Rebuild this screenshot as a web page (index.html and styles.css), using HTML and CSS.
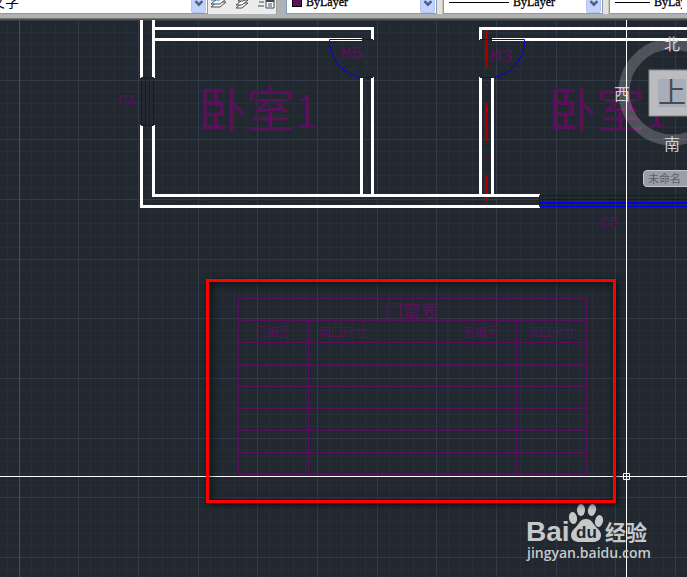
FILE: index.html
```html
<!DOCTYPE html>
<html lang="zh-CN">
<head>
<meta charset="utf-8">
<title>门窗表</title>
<link rel="stylesheet" href="styles.css">
</head>
<body>
<header class="toolbar">
  <div class="combo combo-style">
    <select aria-label="文字样式"><option>文字</option></select>
    <svg class="arrow" viewBox="0 0 15 21"><path d="M4 9l4 4 4-4"/></svg>
  </div>
  <div class="tools">
    <button type="button" aria-label="图层">
      <svg width="18" height="20" viewBox="0 0 18 20"><path class="sheet" d="M1 17h9l6-5H7z"/><path class="sheet" d="M1 14h9l6-5H7z"/><path class="sheet blue" d="M1 10h9l6-5H7z"/></svg>
    </button>
    <button type="button" aria-label="图层匹配">
      <svg width="18" height="20" viewBox="0 0 18 20"><path class="sheet" d="M2 18h6l6-5H8z"/><path class="sheet" d="M2 15h6l6-5H8z"/><path class="sheet" d="M4 11h5l5-4H9z"/></svg>
    </button>
    <button type="button" aria-label="图层状态">
      <svg width="18" height="20" viewBox="0 0 18 20"><path class="sheet" d="M1 12h5M0 16h6M3 9h5"/><path class="panel" d="M8 10h8v8H8z"/><path class="panel-top" d="M8 11h8"/><path class="sheet" d="M10 14h4M10 16h4"/></svg>
    </button>
  </div>
  <div class="gap-bar"></div>
  <div class="combo combo-color">
    <span class="swatch"></span>
    <select aria-label="颜色"><option>ByLayer</option></select>
    <svg class="arrow" viewBox="0 0 15 21"><path d="M4 9l4 4 4-4"/></svg>
  </div>
  <div class="divider"></div>
  <div class="combo combo-line">
    <span class="sample"></span>
    <select aria-label="线型"><option>ByLayer</option></select>
    <svg class="arrow" viewBox="0 0 15 21"><path d="M4 9l4 4 4-4"/></svg>
  </div>
  <div class="divider"></div>
  <div class="combo combo-weight">
    <span class="sample short"></span>
    <select aria-label="线宽"><option>ByLayer</option></select>
  </div>
</header>

<main class="canvas">
  <svg class="drawing" aria-label="平面图">
    <defs>
      <pattern id="grid" x="19" y="20" width="179" height="179" patternUnits="userSpaceOnUse">
        <path class="minor" d="M12 0h1v179h-1zM24 0h1v179h-1zM36 0h1v179h-1zM48 0h1v179h-1zM71 0h1v179h-1zM83 0h1v179h-1zM95 0h1v179h-1zM107 0h1v179h-1zM131 0h1v179h-1zM143 0h1v179h-1zM155 0h1v179h-1zM167 0h1v179h-1z"/>
        <path class="minor" d="M0 12h179v1H0zM0 24h179v1H0zM0 36h179v1H0zM0 48h179v1H0zM0 71h179v1H0zM0 83h179v1H0zM0 95h179v1H0zM0 107h179v1H0zM0 131h179v1H0zM0 143h179v1H0zM0 155h179v1H0zM0 167h179v1H0z"/>
        <path class="major" d="M0 0h1v179H0zM59 0h1v179h-1zM119 0h1v179h-1zM0 0h179v1H0zM0 60h179v1H0zM0 119h179v1H0z"/>
      </pattern>
    </defs>
    <g transform="translate(0 -20)">
      <rect width="100%" height="110%" fill="url(#grid)"/>
      <path class="axis-y" d="M19.5 20V3000"/>

      <g class="room-name">
        <text x="198" y="127">卧室1</text>
        <text x="548" y="127">卧室1</text>
      </g>

      <g class="center-line">
        <path stroke-dashoffset="12" d="M147 33.5H3000M147 201.5H3000"/>
        <path d="M147.5 30V201M367.5 30V201"/>
        <path class="strong" d="M486.5 30V201"/>
      </g>

      <path class="wall" d="M141.5 20V78M153.5 20V78M141.5 125V206.5H540M153.5 125V195.5H540M155 39.5H362M155 28.5H372.5V40M480.5 40V28.5H3000M492 39.5H3000M361.5 77V195M372.5 77V195M480.5 77V195M492.5 77V195"/>

      <g class="opening">
        <path d="M141.5 77.5h12v48h-12zM145.5 77v48M149.5 77v48"/>
        <path d="M3000 195.5H539.5V206.5H3000M540 199.5H3000M540 202.5H3000M540 203.5H3000"/>
        <path d="M373 39.5H329.5A38 38 0 0 0 360 77.5H373"/>
        <path d="M480 39.5H524.5A38 38 0 0 1 494 77.5H480"/>
      </g>

      <g class="tag">
        <text x="340" y="59">M5</text>
        <text x="490" y="62">M3</text>
        <text class="small" x="118" y="105">C4</text>
        <text class="small" x="600" y="227">C5</text>
      </g>

      <g class="compass">
        <circle cx="672" cy="92" r="48"/>
        <rect class="face" x="649" y="70" width="46" height="46"/>
        <rect class="face-inner" x="658" y="79" width="28" height="28"/>
        <text class="top" x="658" y="103">上</text>
        <text x="664" y="50">北</text>
        <text x="614" y="100">西</text>
        <text x="664" y="150">南</text>
      </g>

      <g class="crosshair">
        <path d="M626.5 20V3000M0 476.5H3000M623.5 473.5h6v6h-6z"/>
      </g>

      <g class="watermark">
        <text class="brand" x="526" y="541">Bai</text>
        <ellipse cx="573" cy="518" rx="4" ry="6" transform="rotate(-10 573 518)"/>
        <ellipse cx="581" cy="510" rx="4" ry="6"/>
        <ellipse cx="592" cy="510" rx="4" ry="6" transform="rotate(12 592 510)"/>
        <ellipse cx="599" cy="521" rx="4" ry="6" transform="rotate(12 599 521)"/>
        <path d="M586 519c-6 0-7 5-10 8-3 3-5 5-5 8 0 5 4 7 8 7h14c4 0 8-2 8-7 0-3-2-5-5-8-3-3-4-8-10-8z"/>
        <text class="du" x="576" y="538">du</text>
        <text class="brand-cn" x="605" y="540">经验</text>
        <text class="site" x="527" y="558">jingyan.baidu.com</text>
      </g>
    </g>
  </svg>

  <button type="button" class="ucs">未命名</button>

  <section class="callout">
    <table>
      <thead>
        <tr><th class="title" colspan="5">门窗表</th></tr>
        <tr><th>门编号</th><th>洞口尺寸</th><th></th><th>窗编号</th><th>洞口尺寸</th></tr>
      </thead>
      <tbody>
        <tr><td></td><td></td><td></td><td></td><td></td></tr>
        <tr><td></td><td></td><td></td><td></td><td></td></tr>
        <tr><td></td><td></td><td></td><td></td><td></td></tr>
        <tr><td></td><td></td><td></td><td></td><td></td></tr>
        <tr><td></td><td></td><td></td><td></td><td></td></tr>
        <tr><td></td><td></td><td></td><td></td><td></td></tr>
      </tbody>
    </table>
  </section>
</main>
</body>
</html>
```

FILE: styles.css
```css
* { box-sizing: border-box; }

body {
  margin: 0;
  min-height: 100vh;
  display: flex;
  flex-direction: column;
  overflow: hidden;
  background: #212830;
  font-family: "Liberation Serif", "Noto Sans CJK SC", serif;
}

/* Toolbar: only the lower edge of the row stays in view */
.toolbar {
  display: flex;
  align-items: flex-end;
  height: 20px;
  padding-bottom: 6px;
  overflow: hidden;
  background: linear-gradient(#b0b1b5 18px, #8d8878 18px, #3b3e42 20px);
}

.combo {
  flex: none;
  display: flex;
  align-items: center;
  height: 24px;
  padding: 1px;
  border: 1px solid #7f9db9;
  background: #fff;
}

.combo select {
  flex: 1;
  min-width: 0;
  height: 20px;
  padding: 0 4px;
  border: 0;
  appearance: none;
  background: transparent;
  color: #000;
  font: 12px "Liberation Serif", "Noto Sans CJK SC", serif;
  -webkit-text-stroke: 0.3px #000;
}

.combo-style { width: 208px; border-left: 0; }
.combo-style select { margin-left: -14px; font-size: 14px; -webkit-text-stroke: 0; }
.combo-color { width: 151px; }
.combo-line { width: 160px; }
.combo-weight { flex: 1; min-width: 78px; border-right: 0; }

.arrow {
  flex: none;
  width: 15px;
  height: 21px;
  border: 1px solid #b4c6f0;
  border-radius: 2px;
  background: #c3d3fd;
}

.arrow path { fill: none; stroke: #4d6185; stroke-width: 3; }

.swatch {
  width: 10px;
  height: 10px;
  margin-left: 4px;
  border: 1px solid #000;
  background: #5a105a;
}

.sample { width: 60px; height: 1px; margin-left: 4px; background: #000; }
.sample.short { width: 35px; }

.tools {
  flex: none;
  display: flex;
  align-items: flex-end;
  gap: 6px;
  width: 69px;
  height: 24px;
  padding: 0 2px 4px;
  border-right: 1px solid #a0a0a0;
  background: #ececea;
}

.tools button { width: 18px; height: 20px; padding: 0; border: 0; background: none; }
.tools svg { display: block; }
.sheet { fill: #fafafa; stroke: #444b55; stroke-width: 1; }
.sheet.blue { fill: #8cc4f0; stroke: #1d6fb8; }
.panel { fill: #fff; stroke: #3c4654; }
.panel-top { stroke: #3c4654; stroke-width: 2; }

.gap-bar { flex: none; width: 9px; }
.divider { flex: none; width: 6px; height: 24px; border-right: 1px solid #c8c4b4; background: #e4e2da; }

.canvas { position: relative; flex: 1; overflow: hidden; }
.drawing { position: absolute; inset: 0; width: 100%; height: 100%; }

.minor { fill: #272e38; }
.major { fill: #323949; }
.axis-y { stroke: #207020; }

.room-name { fill: #5a105a; font-size: 48px; }
.tag { fill: #5a105a; font: 19px "Liberation Mono", monospace; }
.tag .small { font-size: 15px; }

.wall { fill: none; stroke: #fff; stroke-width: 3; }
.center-line { fill: none; stroke: #900000; stroke-dasharray: 38 17 1 17; }
.center-line .strong { stroke: #b00000; stroke-width: 2; }
.opening { fill: none; stroke: #0000f0; }

.compass { fill: #cdcfd1; font: 16px "Noto Sans CJK SC", sans-serif; }
.compass circle { fill: none; stroke: #fff; stroke-opacity: 0.2; stroke-width: 11; }
.compass .face { fill: #bbbcbf; stroke: #85878b; }
.compass .face-inner { fill: #a8adb8; }
.compass .top { fill: #454b57; font-size: 28px; }

.crosshair { fill: none; stroke: #fff; }

.watermark { fill: #c6c8ca; font-weight: 700; }
.watermark .brand { font-family: "Liberation Sans", sans-serif; font-size: 28px; }
.watermark .du { fill: #212830; font-family: "Liberation Sans", sans-serif; font-size: 17px; }
.watermark .brand-cn { font-family: "Noto Sans CJK SC", sans-serif; font-size: 21px; }
.watermark .site { font-family: "Open Sans", sans-serif; font-size: 14px; font-weight: 600; }

.ucs {
  position: absolute;
  top: 150px;
  left: 643px;
  width: 72px;
  height: 17px;
  padding: 0 4px;
  border: 1px solid #c4c6cc;
  border-radius: 4px;
  background: #9b9eaa;
  color: #5a5e6a;
  font: 11px/15px "Noto Sans CJK SC", sans-serif;
  text-align: left;
}

.callout {
  position: absolute;
  top: 259px;
  left: 206px;
  padding: 16px 26px 25px 29px;
  border: 3px solid #f00;
  box-shadow: 2px 2px 6px rgba(0, 0, 0, 0.6), inset 2px 2px 8px rgba(0, 0, 0, 0.6);
}

.callout table {
  width: 349px;
  border-collapse: collapse;
  table-layout: fixed;
  color: #5a105a;
  font: 12px/18px "Noto Sans CJK SC", sans-serif;
}

.callout th, .callout td {
  height: 22px;
  padding: 0;
  border: 1px solid #5a105a;
  font-weight: 400;
  white-space: nowrap;
}

.callout th { padding-right: 2px; }

.callout .title { font-size: 18px; }
```
